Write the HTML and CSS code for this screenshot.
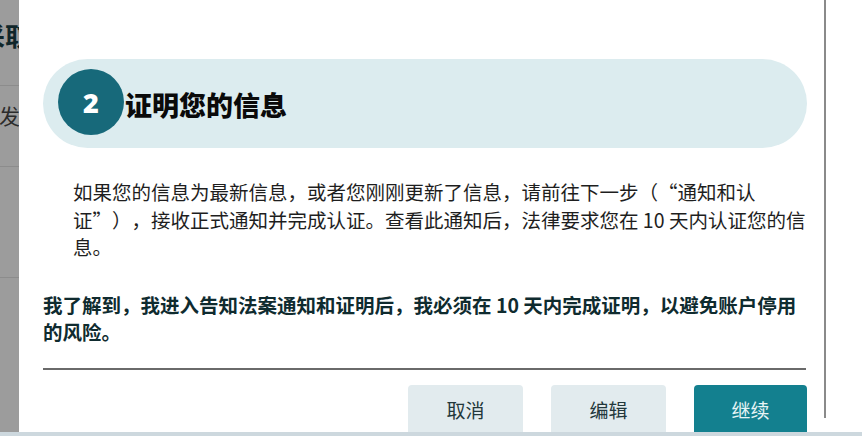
FILE: index.html
```html
<!DOCTYPE html>
<html lang="zh-CN">
<head>
<meta charset="utf-8">
<title>证明您的信息</title>
<link rel="stylesheet" href="styles.css">
</head>
<body>
<div class="screen">
  <div class="stage">
    <aside class="behind">
      <div class="behind-title">采取</div>
      <div class="behind-row behind-row-text">发送</div>
      <div class="behind-row behind-row-tall"></div>
      <div class="behind-row behind-row-last"></div>
    </aside>
    <section class="modal">
      <div class="step">
        <div class="step-num">2</div>
        <h2 class="step-title">证明您的信息</h2>
      </div>
      <p class="info">如果您的信息为最新信息，或者您刚刚更新了信息，请前往下一步（“通知和认证”），接收正式通知并完成认证。查看此通知后，法律要求您在 10 天内认证您的信息。</p>
      <p class="ack">我了解到，我进入告知法案通知和证明后，我必须在 10 天内完成证明，以避免账户停用的风险。</p>
      <hr class="rule">
      <div class="actions">
        <button class="btn btn-secondary">取消</button>
        <button class="btn btn-secondary">编辑</button>
        <button class="btn btn-primary">继续</button>
      </div>
    </section>
    <div class="edge"></div>
  </div>
  <div class="taskbar"></div>
</div>
</body>
</html>
```

FILE: styles.css
```css
* { box-sizing: border-box; }

html, body {
  margin: 0;
  padding: 0;
  background: #ffffff;
  overflow: hidden;
}

body {
  font-family: "Noto Sans CJK SC", "Noto Sans", sans-serif;
  color: #222222;
  text-spacing-trim: space-all;
}

.screen {
  width: 862px;
  height: 436px;
  display: flex;
  flex-direction: column;
  overflow: hidden;
}

.stage {
  height: 432px;
  display: flex;
  align-items: flex-start;
  overflow: hidden;
}

/* page content visible behind the dialog */
.behind {
  width: 19px;
  height: 432px;
  flex: none;
  background: #9c9c9c;
  overflow: hidden;
  white-space: nowrap;
}

.behind-title {
  height: 86px;
  padding-top: 16px;
  margin-left: -20px;
  font-size: 25px;
  font-weight: 700;
  line-height: 38px;
  color: #10262a;
  border-bottom: 1px solid #8c8c8c;
}

.behind-row {
  height: 81px;
  border-bottom: 1px solid #8c8c8c;
}

.behind-row-text {
  padding-top: 14px;
  margin-left: -1px;
  font-size: 21px;
  line-height: 30px;
  color: #2b2b2b;
}

.behind-row-tall {
  height: 111px;
}

.behind-row-last {
  border-bottom: 0;
}

/* dialog */
.modal {
  width: 805px;
  height: 432px;
  flex: none;
  background: #ffffff;
  padding: 59px 17px 0 24px;
}

.step {
  height: 89px;
  border-radius: 45px;
  background: #dcecef;
  display: flex;
  align-items: center;
  padding-left: 15px;
  padding-bottom: 3px;
}

.step-num {
  width: 66px;
  height: 66px;
  flex: none;
  border-radius: 50%;
  background: #17697a;
  color: #ffffff;
  font-family: "Open Sans", "Noto Sans", sans-serif;
  font-size: 27px;
  font-weight: 800;
  display: flex;
  align-items: center;
  justify-content: center;
}

.step-title {
  margin: 0 0 0 1px;
  font-size: 27px;
  font-weight: 900;
  color: #0a0a0a;
  line-height: 1;
  padding-top: 4px;
}

.info {
  margin: 30px -8px 0 30px;
  font-size: 19.5px;
  line-height: 27.5px;
  color: #1e1e1e;
}

.ack {
  margin: 30px 0 0 0;
  font-size: 19.5px;
  font-weight: 700;
  line-height: 27px;
  color: #0f2b2f;
}

.rule {
  margin: 23px 0 0 0;
  width: 763px;
  border: 0;
  height: 2px;
  background: #6a6a6a;
}

.actions {
  margin-top: 15px;
  display: flex;
  justify-content: flex-end;
  gap: 28px;
}

.btn {
  width: 115px;
  height: 50px;
  border: 0;
  border-radius: 4px;
  font-family: "Noto Sans CJK SC", "Noto Sans", sans-serif;
  font-size: 19px;
  padding: 0;
}

.btn-secondary {
  background: #e2ebee;
  color: #23373b;
}

.btn-primary {
  width: 113px;
  background: #13808f;
  color: #e6f4f5;
}

.edge {
  width: 2px;
  height: 418px;
  flex: none;
  background: #8a8a8a;
}

.taskbar {
  height: 4px;
  background: #cdd8de;
}
```
